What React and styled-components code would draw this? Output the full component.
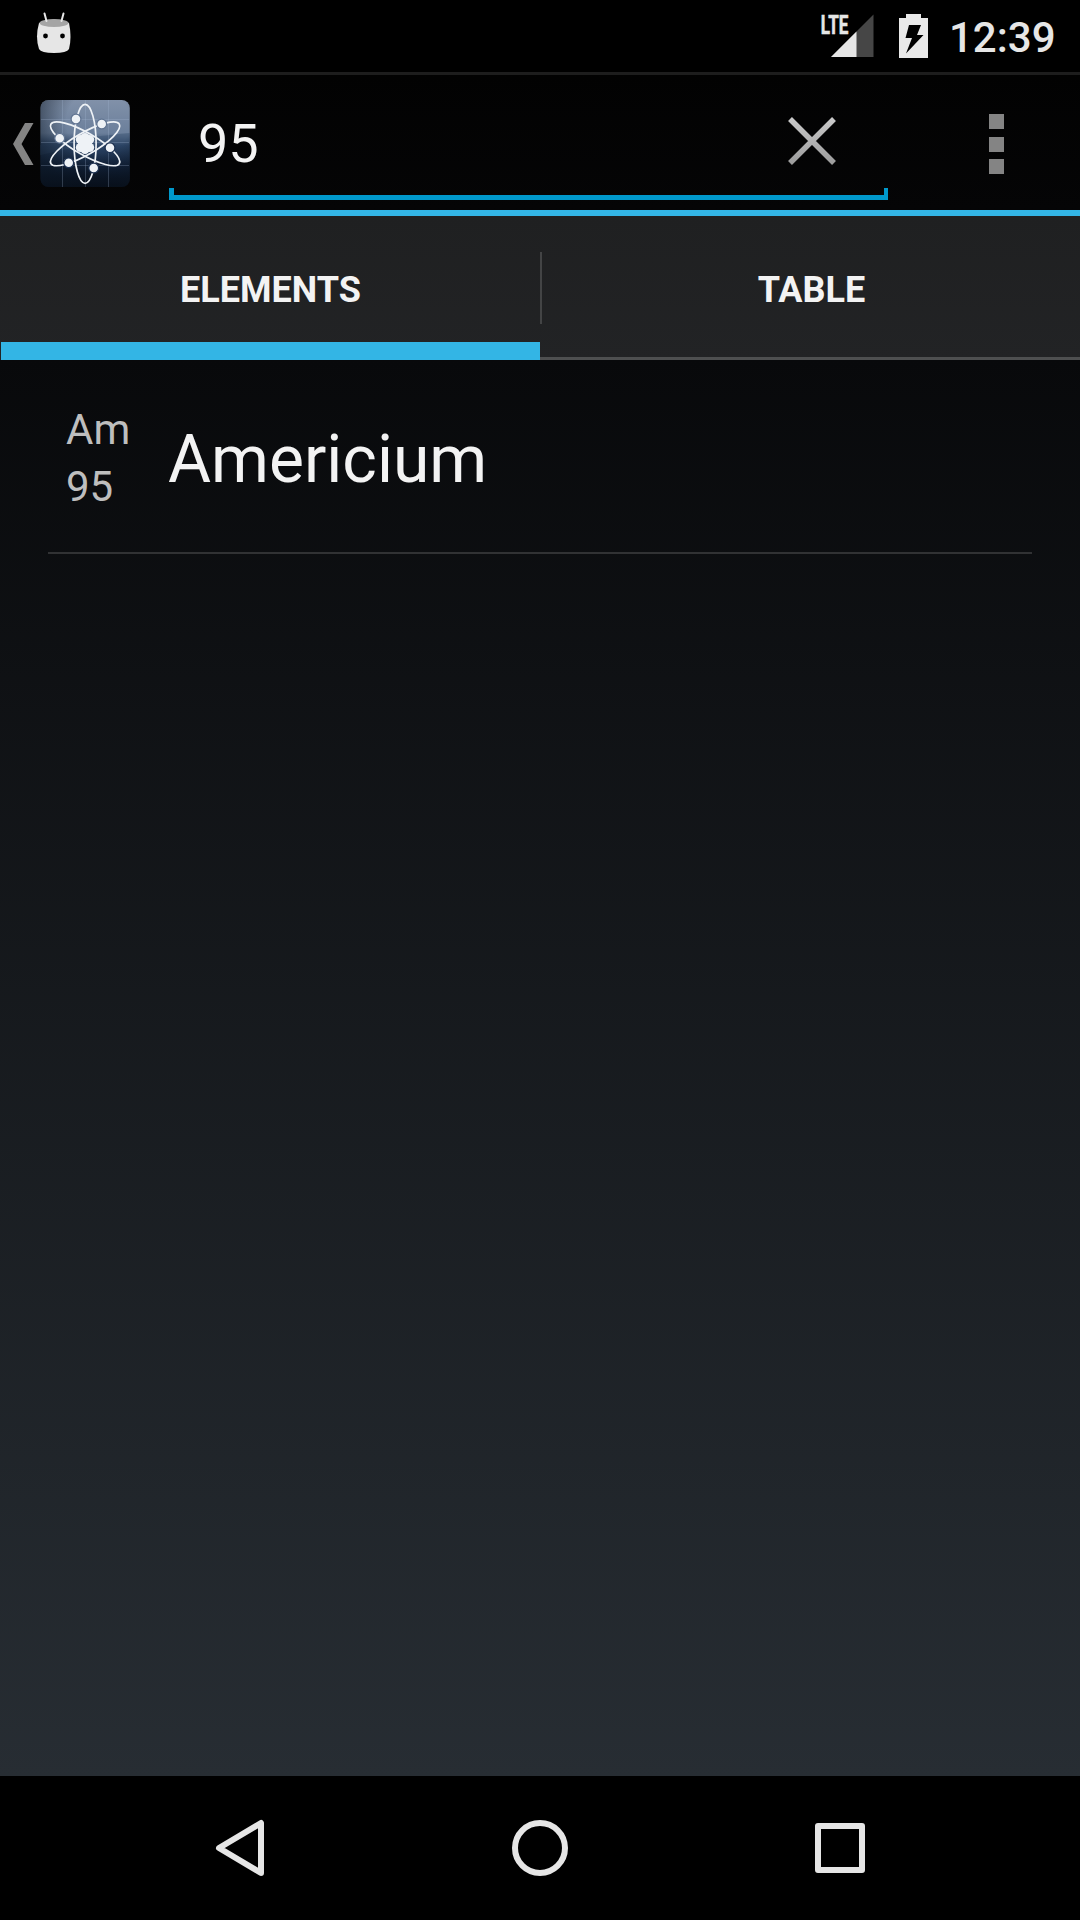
import React from "react";
import styled, { createGlobalStyle } from "styled-components";

const Global = createGlobalStyle`
  * { box-sizing: border-box; }
  body { margin: 0; background: #000; }
`;

const Screen = styled.div`
  width: 1080px;
  height: 1920px;
  display: flex;
  flex-direction: column;
  overflow: hidden;
  background: #000;
  color: #f3f3f3;
  font-family: Roboto, sans-serif;
`;

const StatusBar = styled.header`
  height: 72px;
  flex: none;
  display: flex;
  align-items: flex-start;
  background: #000;
`;

const BugIcon = styled.svg`
  margin: 12px 0 0 36px;
`;

const StatusRight = styled.div`
  margin-left: auto;
  display: flex;
  align-items: flex-start;
  padding-right: 24px;
`;

const Signal = styled.svg`
  margin-top: 2px;
`;

const Battery = styled.svg`
  margin: 14px 0 0 25px;
`;

const Clock = styled.time`
  width: 107px;
  margin: 13px 0 0 21px;
  font-size: 42px;
  line-height: 50px;
  font-weight: 500;
  color: #e6e6e6;
  white-space: nowrap;
`;

const ActionBar = styled.div`
  height: 144px;
  flex: none;
  display: flex;
  align-items: flex-start;
  border-top: 3px solid #1d1d1d;
  border-bottom: 6px solid #33b5e5;
  background: linear-gradient(#020202, #050506);
`;

const UpArrow = styled.svg`
  margin: 48px 0 0 13px;
`;

const AppIcon = styled.svg`
  margin: 24px 0 0 6px;
`;

const SearchField = styled.div`
  width: 719px;
  height: 125px;
  margin-left: 39px;
  display: flex;
  flex-direction: column;
`;

const SearchContent = styled.div`
  flex: 1;
  display: flex;
  justify-content: space-between;
  align-items: flex-start;
  padding: 0 51px 0 29px;
`;

const Query = styled.span`
  margin-top: 37px;
  font-size: 54px;
  line-height: 64px;
`;

const ClearIcon = styled.svg`
  margin-top: 41px;
`;

const Underline = styled.div`
  height: 12px;
  border: solid #0099cc;
  border-width: 0 4px 5px 5px;
`;

const Overflow = styled.div`
  height: 60px;
  margin: 39px 0 0 101px;
  display: flex;
  flex-direction: column;
  justify-content: space-between;
`;

const Dot = styled.i`
  width: 15px;
  height: 15px;
  background: #848484;
`;

const Tabs = styled.nav`
  height: 144px;
  flex: none;
  display: flex;
  background: linear-gradient(#1f2021, #222325);
`;

const Tab = styled.div`
  flex: 1;
  display: flex;
  flex-direction: column;
`;

const TabLabel = styled.div`
  flex: 1;
  display: flex;
  align-items: flex-start;
  justify-content: center;
  padding: 53px 0 0 ${(p) => p.$nudge}px;
  font-size: 36px;
  line-height: 42px;
  font-weight: 700;
`;

const TabMarker = styled.div`
  height: ${(p) => (p.$active ? 18 : 3)}px;
  margin-left: ${(p) => (p.$active ? 1 : 0)}px;
  background: ${(p) => (p.$active ? "#33b5e5" : "#4e4f50")};
`;

const TabDivider = styled.div`
  width: 2px;
  height: 72px;
  margin: 36px -2px 0 0;
  background: #434445;
`;

const Content = styled.main`
  flex: 1;
  padding: 0 48px;
  background: linear-gradient(#08090b, #272d33);
`;

const Row = styled.div`
  height: 194px;
  display: flex;
  padding-left: 18px;
  border-bottom: 2px solid #313234;
`;

const Meta = styled.div`
  width: 102px;
  padding-top: 41px;
  display: flex;
  flex-direction: column;
  font-size: 42px;
  line-height: 57px;
  color: #bebebe;
`;

const Name = styled.div`
  padding-top: 61px;
  font-size: 66px;
  line-height: 77px;
`;

const NavBar = styled.footer`
  height: 144px;
  flex: none;
  display: flex;
  justify-content: center;
  align-items: center;
  gap: 200px;
`;

const electrons = [[36, 20], [61.7, 25], [19.7, 39.2], [70, 48.7], [28.7, 63.8], [53.7, 69]];
const nucleus = [[45, 38.5], [40.3, 40.5], [49.7, 40.5], [40.3, 48.5], [49.7, 48.5], [45, 50.5]];
const grid = [22, 45, 68];

function Atom() {
  return (
    <AppIcon width="90" height="90" viewBox="0 0 90 90">
      <defs>
        <linearGradient id="sky" x1="0" y1="0" x2="0" y2="1">
          <stop offset="0" stopColor="#8191a9" />
          <stop offset=".38" stopColor="#6b7f9b" />
          <stop offset=".52" stopColor="#2c4566" />
          <stop offset=".75" stopColor="#13233c" />
          <stop offset="1" stopColor="#050a14" />
        </linearGradient>
        <radialGradient id="shade" cx=".65" cy=".25" r=".8">
          <stop offset=".45" stopColor="#0a1420" stopOpacity="0" />
          <stop offset="1" stopColor="#0a1420" stopOpacity=".65" />
        </radialGradient>
      </defs>
      <rect x=".5" y="1" width="89.3" height="87" rx="8" fill="url(#sky)" />
      <path d="M89.8 34Q55 37 .5 46V56Q50 44 89.8 43Z" fill="#38506f" fillOpacity=".45" />
      <rect x=".5" y="1" width="89.3" height="87" rx="8" fill="url(#shade)" />
      <g stroke="#a8bdd8" strokeOpacity=".25">
        {grid.map((v) => <path key={v} d={`M${v + 0.5} 1V88M1 ${v - 1.5}H89`} />)}
      </g>
      <g fill="none" stroke="#eef2f6" strokeWidth="1.7">
        {[0, 60, 120].map((a) => (
          <ellipse key={a} cx="45.1" cy="44.8" rx="11" ry="39.5" transform={`rotate(${a} 45.1 44.8)`} />
        ))}
      </g>
      {electrons.map(([x, y]) => (
        <circle key={x} cx={x} cy={y} r="4.9" fill="#eef2f6" stroke={y < 45 ? "#5f7390" : "#1c3050"} strokeWidth="1.2" />
      ))}
      <g fill="#eef2f6">
        {nucleus.map(([x, y]) => <circle key={`${x}-${y}`} cx={x} cy={y} r="4.5" />)}
        <circle cx="45" cy="44.5" r="7" />
      </g>
    </AppIcon>
  );
}

export default function App() {
  return (
    <>
      <Global />
      <Screen>
        <StatusBar>
          <BugIcon width="36" height="42" viewBox="0 0 36 42">
            <path d="M3 11Q18 4 33 11Q36 25 33 37Q31 41 18 41Q5 41 3 37Q-1 25 3 11Z" fill="#e6e6e6" />
            <ellipse cx="18" cy="11" rx="14.5" ry="4" fill="#a5a5a5" />
            <path d="M8.5 1.5L10.5 9M27.5 1.5L25.5 9" stroke="#e6e6e6" strokeWidth="2" strokeLinecap="round" />
            <circle cx="9.5" cy="24" r="2.4" />
            <circle cx="26.5" cy="24" r="2.4" />
          </BugIcon>
          <StatusRight>
            <Signal width="54" height="58" viewBox="0 -10 54 58">
              <path d="M11 45L53.5 2.5V45Z" fill="#464646" />
              <path d="M11 45L36.5 19.5V45Z" fill="#e6e6e6" />
              <text x="0.8" y="21.5" fontFamily="Roboto" fontWeight="700" fontSize="25.5" textLength="27.5" lengthAdjust="spacingAndGlyphs" fill="#e6e6e6" stroke="#e6e6e6" strokeWidth=".6">LTE</text>
            </Signal>
            <Battery width="29" height="44" viewBox="0 0 29 44">
              <path d="M0 4H7V0H22V4H29V44H0Z" fill="#e9e9e9" />
              <path d="M10 11H22L18 21H24.5L7 39.5L13 24H6.5Z" fill="#000" />
            </Battery>
            <Clock>12:39</Clock>
          </StatusRight>
        </StatusBar>
        <ActionBar>
          <UpArrow width="21" height="42" viewBox="0 0 21 42">
            <path d="M12 0H20.5L8.5 21L20.5 42H12L0 21Z" fill="#848484" />
          </UpArrow>
          <Atom />
          <SearchField>
            <SearchContent>
              <Query>95</Query>
              <ClearIcon width="50" height="50" viewBox="0 0 50 50">
                <defs>
                  <linearGradient id="cross" gradientUnits="userSpaceOnUse" x1="0" y1="0" x2="0" y2="50">
                    <stop stopColor="#ccc" />
                    <stop offset="1" stopColor="#9a9a9a" />
                  </linearGradient>
                </defs>
                <path d="M3 3L47 47M47 3L3 47" stroke="url(#cross)" strokeWidth="5.5" />
              </ClearIcon>
            </SearchContent>
            <Underline />
          </SearchField>
          <Overflow>
            <Dot />
            <Dot />
            <Dot />
          </Overflow>
        </ActionBar>
        <Tabs>
          <Tab>
            <TabLabel $nudge={1}>ELEMENTS</TabLabel>
            <TabMarker $active />
          </Tab>
          <TabDivider />
          <Tab>
            <TabLabel $nudge={3}>TABLE</TabLabel>
            <TabMarker />
          </Tab>
        </Tabs>
        <Content>
          <Row>
            <Meta>
              <span>Am</span>
              <span>95</span>
            </Meta>
            <Name>Americium</Name>
          </Row>
        </Content>
        <NavBar>
          <svg width="100" height="60" viewBox="0 0 100 60" fill="none" stroke="#e6e6e6" strokeWidth="6" strokeLinejoin="round">
            <path d="M29 30L71 5V55Z" />
          </svg>
          <svg width="100" height="60" viewBox="0 0 100 60" fill="none" stroke="#e6e6e6" strokeWidth="6">
            <circle cx="50" cy="30" r="25" />
          </svg>
          <svg width="100" height="60" viewBox="0 0 100 60" fill="none" stroke="#e6e6e6" strokeWidth="6" strokeLinejoin="round">
            <rect x="28" y="8" width="44" height="44" />
          </svg>
        </NavBar>
      </Screen>
    </>
  );
}
